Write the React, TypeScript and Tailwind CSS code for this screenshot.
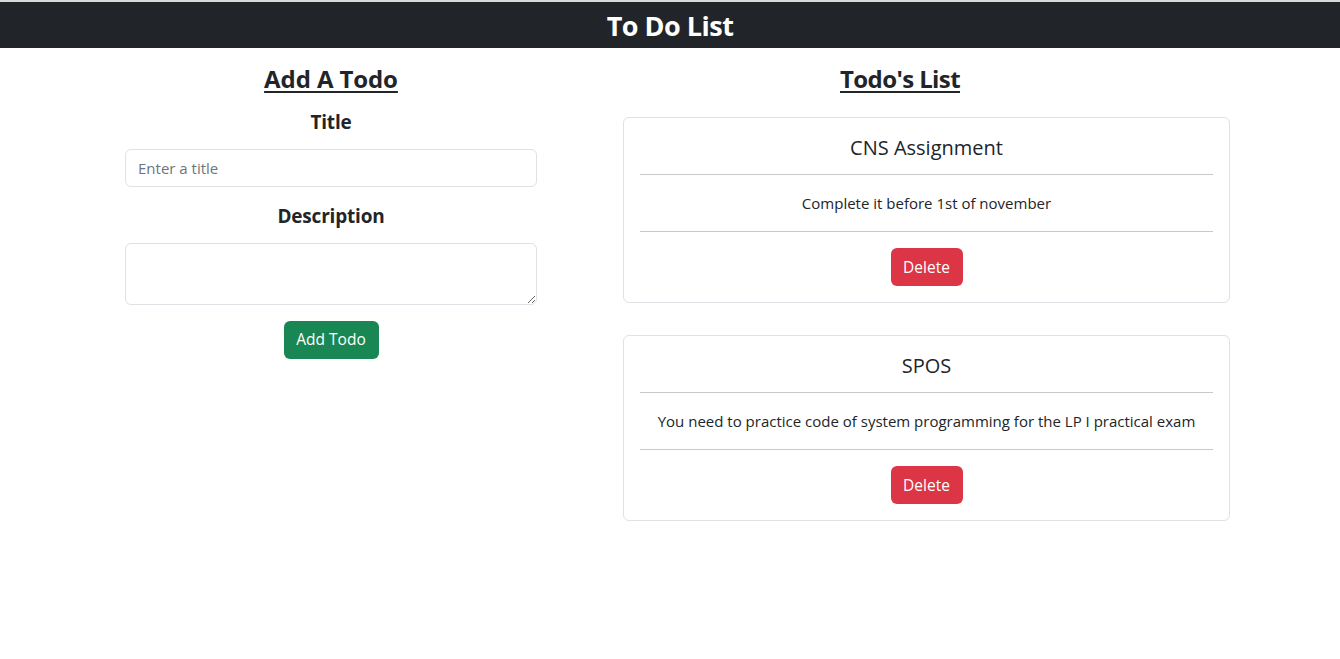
import React from "react";

const todos = [
  { title: "CNS Assignment", desc: "Complete it before 1st of november" },
  {
    title: "SPOS",
    desc: "You need to practice code of system programming for the LP I practical exam",
  },
];

export default function App() {
  return (
    <div
      className="min-h-[659px] bg-white text-[#212529]"
      style={{ fontFamily: '"Open Sans", "Noto Sans", sans-serif' }}
    >
      <div className="h-[2px] bg-[#d9d9d9]" />
      <nav className="h-[46px] bg-[#212529] flex items-center justify-center">
        <h1 className="text-[27px] font-bold text-white leading-none tracking-[-0.5px]">To Do List</h1>
      </nav>
      <div className="flex">
        <div className="ml-[125px] w-[412px] flex flex-col items-center">
          <h3 className="mt-[17px] text-[24px] font-bold underline underline-offset-[3px] decoration-[2px] leading-[28px] tracking-[-0.1px]">
            Add A Todo
          </h3>
          <label className="mt-[17px] text-[19px] font-bold leading-[24px] tracking-[-0.2px]">Title</label>
          <input
            className="mt-[15px] w-full h-[38px] border border-[#dee2e6] rounded-[6px] px-[12px] text-[15px] placeholder:text-[#6c757d] outline-none"
            placeholder="Enter a title"
          />
          <label className="mt-[17px] text-[19px] font-bold leading-[24px] tracking-[-0.2px]">Description</label>
          <textarea className="mt-[15px] w-full h-[62px] border border-[#dee2e6] rounded-[6px] px-[12px] py-[6px] text-[15px] outline-none block" />
          <button className="mt-[16px] h-[38px] w-[95px] rounded-[6px] bg-[#198754] text-white text-[15.5px]">
            Add Todo
          </button>
        </div>
        <div className="ml-[86px] w-[607px] flex flex-col">
          <div className="w-[554px] flex justify-center">
            <h3 className="mt-[17px] text-[24px] font-bold underline underline-offset-[3px] decoration-[2px] leading-[28px] tracking-[-0.6px]">
              Todo's List
            </h3>
          </div>
          <div className="mt-[24px] flex flex-col gap-[32px]">
            {todos.map((t) => (
              <div
                key={t.title}
                className="border border-[#dee2e6] rounded-[6px] p-[16px] flex flex-col items-center"
              >
                <h5 className="pt-[2px] text-[20px] font-medium leading-[24px]">{t.title}</h5>
                <hr className="w-full mt-[14px] border-t border-[#c8c9ca]" />
                <p className="mt-[16px] text-[15px] leading-[24px]">{t.desc}</p>
                <hr className="w-full mt-[16px] border-t border-[#c8c9ca]" />
                <button className="mt-[16px] h-[38px] w-[72px] rounded-[6px] bg-[#dc3545] text-white text-[15.5px] pt-[1px]">
                  Delete
                </button>
              </div>
            ))}
          </div>
        </div>
      </div>
    </div>
  );
}
